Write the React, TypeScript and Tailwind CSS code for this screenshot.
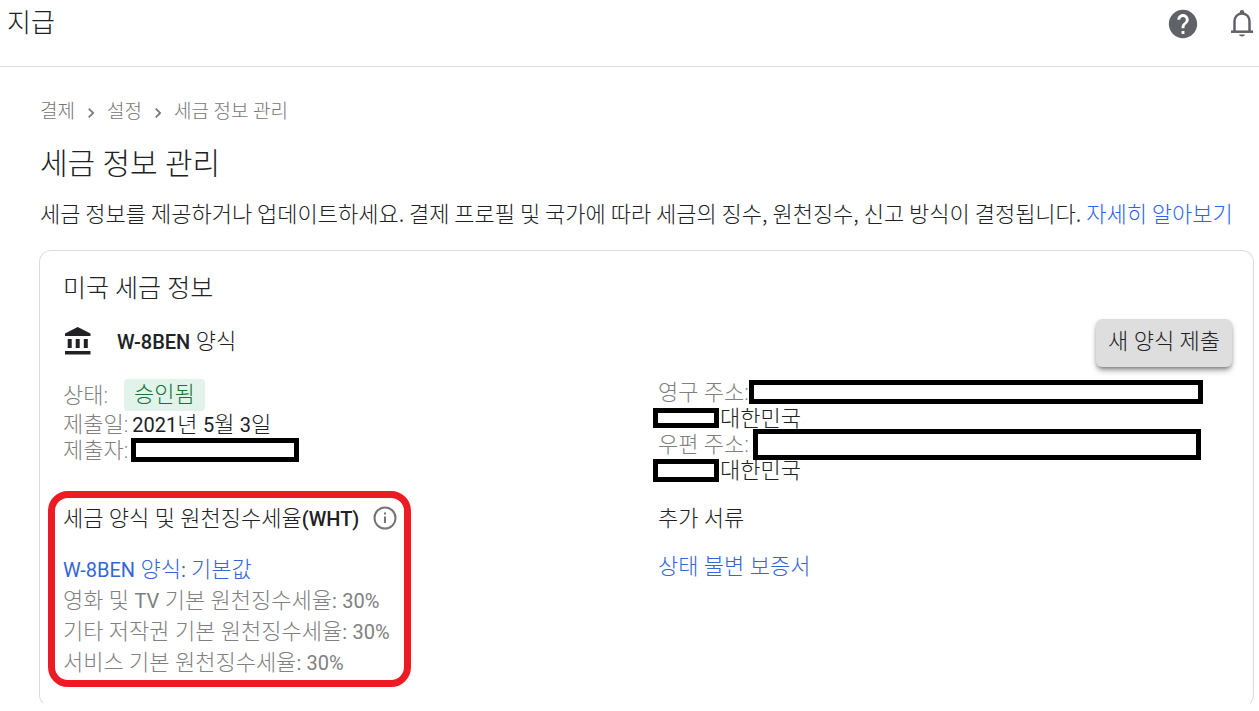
import type { ReactNode } from "react";
import { MdChevronRight, MdHelp } from "react-icons/md";

function Latin({ children }: { children: ReactNode }) {
  return <span className="text-xl leading-none font-normal">{children}</span>;
}

function Redacted({ className }: { className: string }) {
  return <span aria-hidden="true" className={`block shrink-0 border-[5px] border-black bg-white ${className}`} />;
}

function BellIcon() {
  return (
    <svg width="32" height="32" viewBox="0 0 32 32" aria-hidden="true">
      <g fill="none" stroke="currentColor" strokeWidth="2.500">
        <path d="M8.500 23V13.500c0-4.600 3-8 7.500-8s7.500 3.400 7.500 8V23" />
        <path d="M5 23.700h22" />
      </g>
      <path d="M13.700 5.500V4.300a2.300 2.300 0 0 1 4.600 0v1.200zM13 26.500h6c-.3 1.300-1.500 2-3 2s-2.700-.7-3-2z" fill="currentColor" />
    </svg>
  );
}

function BankIcon() {
  return (
    <svg width="30" height="30" viewBox="0 0 30 30" fill="currentColor" aria-hidden="true">
      <path d="M14.700 1 27.500 7.500V10H2V7.500zM4.700 13h4v9h-4zM12.700 13h4v9h-4zM20.800 13h4v9h-4zM2 25h25.500v3.500H2z" />
    </svg>
  );
}

function InfoIcon() {
  return (
    <svg width="24" height="24" viewBox="0 0 24 24" aria-hidden="true">
      <circle cx="12" cy="12" r="10.500" fill="none" stroke="currentColor" strokeWidth="2" />
      <path d="M11 10.500h2V17h-2zM11 6.500h2v2h-2z" fill="currentColor" />
    </svg>
  );
}

const rates = ["영화 및 TV 기본 원천징수세율: 30%", "기타 저작권 기본 원천징수세율: 30%", "서비스 기본 원천징수세율: 30%"];

function MixedText({ text }: { text: string }) {
  const parts = text.split(/([A-Za-z0-9%:-]+)/);
  return <>{parts.map((part, i) => (i % 2 ? <Latin key={i}>{part}</Latin> : part))}</>;
}

export default function App() {
  return (
    <div className="bg-white font-[Roboto,'Noto_Sans_CJK_KR',sans-serif] font-light text-[#202124]">
      <header className="flex h-[67px] items-start justify-between border-b border-[#dadce0] pl-[7px]">
        <h1 className="mt-[5px] text-[26px] leading-9">지급</h1>
        <div className="mt-[7px] flex items-center gap-[26px] pr-px text-[#5f6368]">
          <button type="button" aria-label="도움말"><MdHelp size={34} /></button>
          <button type="button" aria-label="알림"><BellIcon /></button>
        </div>
      </header>

      <main className="pt-7 pr-[5px] pb-2 pl-[39px]">
        <nav aria-label="탐색경로" className="flex h-[34px] items-center pl-px text-[19px] text-[#757575]">
          <a href="#payments">결제</a>
          <MdChevronRight size={20} className="mx-[6px] mt-[2px]" />
          <a href="#settings">설정</a>
          <MdChevronRight size={20} className="mx-[6px] mt-[2px]" />
          <span>세금 정보 관리</span>
        </nav>
        <h2 className="mt-[15px] pl-px text-[30px] leading-10">세금 정보 관리</h2>
        <p className="mt-3 pl-px font-['Noto_Sans_CJK_KR',sans-serif] text-[22px] leading-8 whitespace-nowrap">
          세금 정보를 제공하거나 업데이트하세요. 결제 프로필 및 국가에 따라 세금의 징수, 원천징수, 신고 방식이 결정됩니다.{" "}
          <a href="#learn" className="text-[#2962ff]">자세히 알아보기</a>
        </p>

        <section className="mt-[22px] rounded-xl border border-[#dadce0] border-b-transparent pt-[22px] pr-[21px] pb-[19px] pl-[23px] text-[22px]">
          <h3 className="text-[25px] leading-8">미국 세금 정보</h3>
          <div className="mt-[14px] flex items-start justify-between">
            <div className="flex h-11 items-center gap-6">
              <BankIcon />
              <h4><span className="text-xl font-medium">W-8BEN</span> 양식</h4>
            </div>
            <button type="button" className="h-12 rounded-md bg-[#dedede] px-3 pb-1 shadow-md shadow-black/40">새 양식 제출</button>
          </div>

          <div className="mt-3 grid grid-cols-[509fr_491fr]">
            <div>
              <div className="flex h-8 items-center">
                <span className="text-[#808080]">상태:</span>
                <span className="ml-4 rounded bg-[#e2f3eb] px-[10px] leading-8 text-[#137333]">승인됨</span>
              </div>
              <div className="flex h-[26px] items-center gap-1 whitespace-nowrap">
                <span className="text-[#808080]">제출일:</span>
                <span><MixedText text="2021년 5월 3일" /></span>
              </div>
              <div className="flex h-[26px] items-center gap-[3px] whitespace-nowrap">
                <span className="text-[#808080]">제출자:</span>
                <Redacted className="h-6 w-[168px]" />
              </div>

              <div className="mt-7 -ml-[15px] w-[363px] rounded-[20px] border-[7px] border-[#ed1c24] pt-[7px] pr-[7px] pb-[2px] pl-2 whitespace-nowrap">
                <h4 className="flex h-[26px] items-center justify-between">
                  <span>세금 양식 및 원천징수세율<span className="text-xl leading-none font-medium">(WHT)</span></span>
                  <button type="button" aria-label="원천징수세율 정보" className="text-[#757575]"><InfoIcon /></button>
                </h4>
                <a href="#form" className="mt-[23px] block leading-[31px] text-[#3367d6]"><MixedText text="W-8BEN 양식: 기본값" /></a>
                <ul className="text-[#808080]">
                  {rates.map((rate) => <li key={rate} className="leading-[31px]"><MixedText text={rate} /></li>)}
                </ul>
              </div>
            </div>

            <div>
              <div className="flex h-[26px] items-center">
                <span className="shrink-0 text-[#808080]">영구 주소:</span>
                <Redacted className="h-6 w-[454px]" />
              </div>
              <div className="-ml-[5px] flex h-[26px] items-center gap-px">
                <Redacted className="h-5 w-[66px]" />
                <span>대한민국</span>
              </div>
              <div className="flex h-[26px] items-center gap-1">
                <span className="shrink-0 text-[#808080]">우편 주소:</span>
                <Redacted className="h-[31px] w-[448px]" />
              </div>
              <div className="-ml-[5px] flex h-[26px] items-center gap-px">
                <Redacted className="h-[23px] w-[66px]" />
                <span>대한민국</span>
              </div>
              <h4 className="mt-[23px] leading-[26px]">추가 서류</h4>
              <a href="#affidavit" className="mt-[22px] block leading-[26px] text-[#3367d6]">상태 불변 보증서</a>
            </div>
          </div>
        </section>
      </main>
    </div>
  );
}
